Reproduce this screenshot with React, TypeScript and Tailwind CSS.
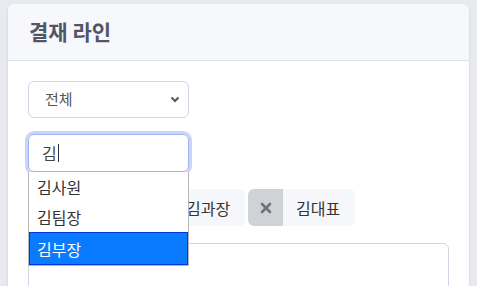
import React from "react";

const font = { fontFamily: '"Noto Sans CJK KR", "Noto Sans", sans-serif' };

const tags = ["김사원", "김과장", "김대표"];
const options = ["김사원", "김팀장", "김부장"];

const Tag = ({ name }: { name: string }) => (
    <div className="flex h-[37px] w-[107px] items-stretch overflow-hidden rounded-md bg-[#f6f7fb]">
        <div className="flex w-[35px] items-center justify-center bg-[#d1d2d6]">
            <svg width="12" height="12" viewBox="0 0 12 12">
                <path d="M2 2L10 10M10 2L2 10" stroke="#6f727f" strokeWidth="2.6" strokeLinecap="round" />
            </svg>
        </div>
        <span className="flex items-center pl-[13px] text-[16px] text-[#333]">{name}</span>
    </div>
);

const App = () => {
    return (
        <div className="h-[286px] w-[477px] overflow-hidden bg-[#e9eaef] px-2 pt-1" style={font}>
            <div className="h-[300px] rounded-md bg-white shadow-sm">
                <div className="flex h-[57px] items-center rounded-t-md border-b border-[#dde0ea] bg-[#f7f8fc] px-[21px]">
                    <h2 className="text-[21px] font-bold text-[#525664]">결재 라인</h2>
                </div>

                <div className="relative px-5 pt-5">
                    <div className="flex h-[37px] w-[161px] items-center justify-between rounded-md border border-[#d4d4e6] pl-4 pr-2">
                        <span className="text-[15px] text-[#555]">전체</span>
                        <svg width="10" height="7" viewBox="0 0 10 7">
                            <path d="M1.5 1.5L5 5L8.5 1.5" fill="none" stroke="#555" strokeWidth="2" />
                        </svg>
                    </div>

                    <div className="relative mt-4 w-[161px]">
                        <div className="flex h-[38px] items-center rounded-md border border-[#9fb4f0] pl-[13px] shadow-[0_0_0_3px_#cbd6f7]">
                            <span className="text-[16px] text-[#444]">김</span>
                            <span className="ml-[1px] h-[18px] w-px bg-[#333]" />
                        </div>

                        <div className="absolute left-0 top-[38px] z-10 w-[161px] border border-t-0 border-[#b8b8bc] bg-white">
                            {options.map((o, i) => (
                                <div
                                    key={o}
                                    className={
                                        i === 2
                                            ? "flex h-[33px] items-center border border-[#0037d6] bg-[#0a7bff] pl-[7px] text-[16px] text-white"
                                            : "flex h-[30px] items-center pl-2 text-[16px] text-[#333]"
                                    }
                                >
                                    {o}
                                </div>
                            ))}
                        </div>
                    </div>

                    <div className="mt-[17px] flex gap-[3px]">
                        {tags.map((t) => (
                            <Tag key={t} name={t} />
                        ))}
                    </div>

                    <div className="mt-[17px] h-[80px] w-[421px] rounded-md border border-[#d4d4e6]" />
                </div>
            </div>
        </div>
    );
};

export default App;
